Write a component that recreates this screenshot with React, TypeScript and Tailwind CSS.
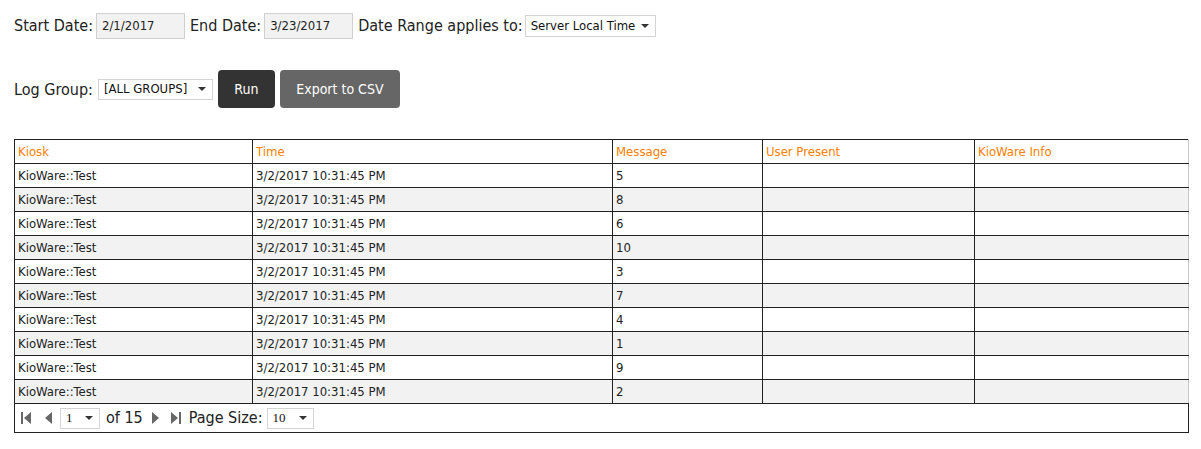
import React from "react";

const rows = ["5", "8", "6", "10", "3", "7", "4", "1", "9", "2"];

const columns = [
  { label: "Kiosk", width: "w-[238px]" },
  { label: "Time", width: "w-[360px]" },
  { label: "Message", width: "w-[150px]" },
  { label: "User Present", width: "w-[212px]" },
  { label: "KioWare Info", width: "w-[214px]" },
];

function Caret() {
  return (
    <svg width="8" height="4" viewBox="0 0 8 4" className="shrink-0">
      <path d="M0 0h8L4 4z" fill="#333" />
    </svg>
  );
}

function FakeSelect({ value, className }: { value: string; className: string }) {
  return (
    <div
      className={`flex items-center justify-between border border-[#d4d4d4] bg-white pl-[5px] pr-[6px] text-[13px] text-[#111] ${className}`}
    >
      <span>{value}</span>
      <Caret />
    </div>
  );
}

function PagerIcon({ kind }: { kind: "first" | "prev" | "next" | "last" }) {
  return (
    <svg width="12" height="14" viewBox="0 0 12 14" className="shrink-0">
      {kind === "first" && (
        <>
          <rect x="1" y="1" width="2" height="12" fill="#666" />
          <path d="M11 1v12L4 7z" fill="#666" />
        </>
      )}
      {kind === "prev" && <path d="M10 1v12L3 7z" fill="#666" />}
      {kind === "next" && <path d="M2 1v12l7-6z" fill="#666" />}
      {kind === "last" && (
        <>
          <path d="M1 1v12l7-6z" fill="#666" />
          <rect x="9" y="1" width="2" height="12" fill="#666" />
        </>
      )}
    </svg>
  );
}

export default function App() {
  return (
    <div className="min-h-[449px] bg-white pl-[14px] pt-[13px] text-[#222] font-['DejaVu_Sans_Condensed','DejaVu_Sans',sans-serif]">
      <div className="flex h-[26px] items-center text-[16px]">
        <span>Start Date:</span>
        <div className="ml-[3px] flex h-[26px] w-[89px] items-center border border-[#d0d0d0] bg-[#f2f2f2] px-[5px] text-[13px]">
          2/1/2017
        </div>
        <span className="ml-[5px]">End Date:</span>
        <div className="ml-[3px] flex h-[26px] w-[89px] items-center border border-[#d0d0d0] bg-[#f2f2f2] px-[5px] text-[13px]">
          3/23/2017
        </div>
        <span className="ml-[5px]">Date Range applies to:</span>
        <FakeSelect value="Server Local Time" className="ml-[2px] h-[22px] w-[131px]" />
      </div>

      <div className="mt-[31px] flex h-[38px] items-center text-[16px]">
        <span className="pt-[2px]">Log Group:</span>
        <FakeSelect value="[ALL GROUPS]" className="ml-[5px] h-[21px] w-[115px]" />
        <button className="ml-[5px] h-[38px] w-[57px] rounded-[4px] bg-[#333] text-[14px] text-white">
          Run
        </button>
        <button className="ml-[5px] h-[38px] w-[120px] rounded-[4px] bg-[#666] text-[14px] text-white">
          Export to CSV
        </button>
      </div>

      <table className="mt-[31px] w-[1174px] table-fixed border-collapse text-[13px]">
        <thead>
          <tr className="h-[24px]">
            {columns.map((c, i) => (
              <th
                key={c.label}
                className={`${c.width} border border-[#222] px-[3px] pt-[1px] text-left font-normal text-[#ff8000] ${
                  i === columns.length - 1 ? "border-r-[#c8c8c8]" : ""
                }`}
              >
                {c.label}
              </th>
            ))}
          </tr>
        </thead>
        <tbody>
          {rows.map((msg, idx) => (
            <tr key={idx} className={`h-[24px] ${idx % 2 === 1 ? "bg-[#f2f2f2]" : "bg-white"}`}>
              <td className="border border-[#222] px-[3px] pt-[1px]">KioWare::Test</td>
              <td className="border border-[#222] px-[3px] pt-[1px]">3/2/2017 10:31:45 PM</td>
              <td className="border border-[#222] px-[3px] pt-[1px]">{msg}</td>
              <td className="border border-[#222] px-[3px]"></td>
              <td className="border border-[#222] border-r-[#c8c8c8] px-[3px]"></td>
            </tr>
          ))}
          <tr className="h-[29px]">
            <td colSpan={5} className="border border-[#222] px-[5px]">
              <div className="flex items-center text-[16px]">
                <PagerIcon kind="first" />
                <span className="ml-[10px]">
                  <PagerIcon kind="prev" />
                </span>
                <FakeSelect
                  value="1"
                  className="ml-[6px] h-[21px] w-[40px] font-['Liberation_Serif',serif]"
                />
                <span className="ml-[6px]">of 15</span>
                <span className="ml-[7px]">
                  <PagerIcon kind="next" />
                </span>
                <span className="ml-[8px]">
                  <PagerIcon kind="last" />
                </span>
                <span className="ml-[7px]">Page Size:</span>
                <FakeSelect
                  value="10"
                  className="ml-[4px] h-[21px] w-[47px] font-['Liberation_Serif',serif]"
                />
              </div>
            </td>
          </tr>
        </tbody>
      </table>
    </div>
  );
}
